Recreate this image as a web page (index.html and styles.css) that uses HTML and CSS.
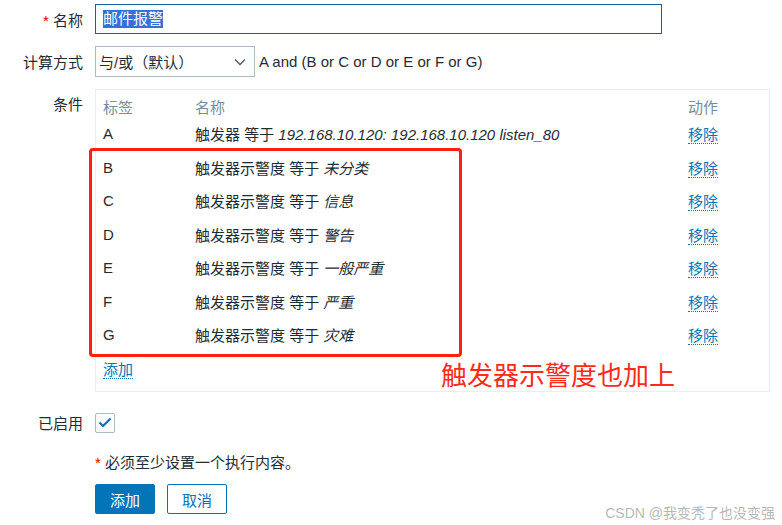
FILE: index.html
```html
<!DOCTYPE html>
<html>

<head>
  <title>动作 - 邮件报警</title>
  <link rel="stylesheet" href="styles.css">
</head>

<body>
  <form class="form">
    <div class="row row-name">
      <label class="label" for="name"><span class="req">*</span> 名称</label>
      <div class="field">
        <div class="input" id="name"><span class="sel">邮件报警</span></div>
      </div>
    </div>

    <div class="row row-calc">
      <label class="label">计算方式</label>
      <div class="field field-inline">
        <div class="select">
          <span>与/或（默认）</span>
          <svg class="chevron" width="12" height="8" viewBox="0 0 12 8"><path d="M1 1.5 L6 6.5 L11 1.5" fill="none" stroke="#4a5a63" stroke-width="1.3"/></svg>
        </div>
        <span class="formula">A and (B or C or D or E or F or G)</span>
      </div>
    </div>

    <div class="row row-cond">
      <label class="label label-top">条件</label>
      <div class="field">
        <div class="cond-box">
          <table class="cond">
            <thead>
              <tr><th class="c-tag">标签</th><th>名称</th><th class="c-act">动作</th></tr>
            </thead>
            <tbody>
              <tr><td>A</td><td>触发器 等于 <i>192.168.10.120: 192.168.10.120 listen_80</i></td><td><a class="link">移除</a></td></tr>
              <tr><td>B</td><td>触发器示警度 等于 <i>未分类</i></td><td><a class="link">移除</a></td></tr>
              <tr><td>C</td><td>触发器示警度 等于 <i>信息</i></td><td><a class="link">移除</a></td></tr>
              <tr><td>D</td><td>触发器示警度 等于 <i>警告</i></td><td><a class="link">移除</a></td></tr>
              <tr><td>E</td><td>触发器示警度 等于 <i>一般严重</i></td><td><a class="link">移除</a></td></tr>
              <tr><td>F</td><td>触发器示警度 等于 <i>严重</i></td><td><a class="link">移除</a></td></tr>
              <tr><td>G</td><td>触发器示警度 等于 <i>灾难</i></td><td><a class="link">移除</a></td></tr>
              <tr><td colspan="3"><a class="link">添加</a></td></tr>
            </tbody>
          </table>
          <div class="mark-box"></div>
          <div class="mark-text">触发器示警度也加上</div>
        </div>
      </div>
    </div>

    <div class="row row-enabled">
      <label class="label">已启用</label>
      <div class="field">
        <span class="checkbox">
          <svg width="14" height="11" viewBox="0 0 14 11"><path d="M1.5 5.5 L5 9 L12.5 1.5" fill="none" stroke="#0275b8" stroke-width="2.2"/></svg>
        </span>
      </div>
    </div>

    <div class="row row-note">
      <div class="label"></div>
      <div class="field"><span class="req">*</span> 必须至少设置一个执行内容。</div>
    </div>

    <div class="row row-buttons">
      <div class="label"></div>
      <div class="field field-inline">
        <button type="button" class="btn btn-main">添加</button>
        <button type="button" class="btn btn-alt">取消</button>
      </div>
    </div>
  </form>

  <div class="watermark">CSDN @我变秃了也没变强</div>
</body>

</html>
```

FILE: styles.css
```css
body {
  margin: 0;
  width: 782px;
  height: 525px;
  position: relative;
  overflow: hidden;
  background: #ffffff;
  color: #1f2c33;
  font-family: "Liberation Sans", "Noto Sans CJK SC", sans-serif;
  font-size: 15px;
}
.form {
  padding-top: 4px;
}
.row {
  display: flex;
  align-items: center;
}
.label {
  width: 83px;
  flex: none;
  margin-right: 12px;
  text-align: right;
}
.label-top {
  align-self: flex-start;
  padding-top: 4px;
}
.field {
  flex: 1;
}
.field-inline {
  display: flex;
  align-items: center;
}
.req {
  color: #d40000;
}
.input {
  box-sizing: border-box;
  width: 567px;
  height: 30px;
  border: 1px solid #1c5f93;
  padding: 0 7px;
  display: flex;
  align-items: center;
}
.sel {
  background: #3470d6;
  color: #ffffff;
  line-height: 18px;
}
.row-calc {
  margin-top: 12px;
}
.select {
  box-sizing: border-box;
  width: 160px;
  height: 31px;
  border: 1px solid #acbbc2;
  padding: 0 8px 0 3px;
  display: flex;
  align-items: center;
  justify-content: space-between;
}
.formula {
  margin-left: 4px;
}
.row-cond {
  margin-top: 12px;
}
.cond-box {
  position: relative;
  box-sizing: border-box;
  width: 675px;
  height: 303px;
  border: 1px solid #ebeef0;
  padding: 5px 7px 0;
}
.cond {
  width: 100%;
  border-collapse: collapse;
}
.cond th {
  height: 22px;
  padding: 0;
  font-weight: normal;
  text-align: left;
  color: #768d99;
}
.cond td {
  height: 33.5px;
  padding: 0;
}
.c-tag {
  width: 92px;
}
.c-act {
  width: 74px;
}
.link {
  color: #0275b8;
  border-bottom: 1px dotted #0275b8;
  cursor: pointer;
}
.mark-box {
  position: absolute;
  left: -7px;
  top: 58px;
  width: 373px;
  height: 209px;
  box-sizing: border-box;
  border: 3px solid #ff1e12;
  border-radius: 4px;
}
.mark-text {
  position: absolute;
  left: 345px;
  top: 271px;
  color: #ff2a1a;
  font-size: 26px;
  line-height: 30px;
  white-space: nowrap;
}
.row-enabled {
  margin-top: 20px;
}
.checkbox {
  box-sizing: border-box;
  width: 20px;
  height: 20px;
  border: 1px solid #acbbc2;
  border-radius: 2px;
  display: flex;
  align-items: center;
  justify-content: center;
}
.row-note {
  margin-top: 21px;
  line-height: 18px;
}
.row-buttons {
  margin-top: 12px;
}
.btn {
  box-sizing: border-box;
  width: 60px;
  height: 30px;
  border-radius: 2px;
  font-family: "Liberation Sans", "Noto Sans CJK SC", sans-serif;
  font-size: 15px;
  padding: 0;
  margin-right: 12px;
}
.btn-main {
  background: #0275b8;
  border: 1px solid #0275b8;
  color: #ffffff;
}
.btn-alt {
  background: #ffffff;
  border: 1px solid #0275b8;
  color: #0275b8;
}
.watermark {
  position: absolute;
  right: 7px;
  bottom: 3px;
  color: #b8b8b8;
  font-size: 14px;
}
```
